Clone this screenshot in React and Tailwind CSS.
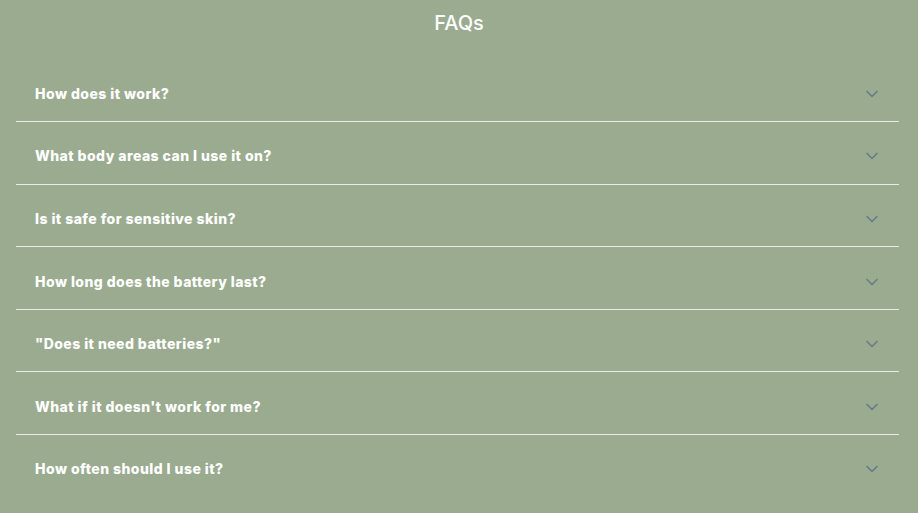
import React from "react";

const items = [
  "How does it work?",
  "What body areas can I use it on?",
  "Is it safe for sensitive skin?",
  "How long does the battery last?",
  "\"Does it need batteries?\"",
  "What if it doesn't work for me?",
  "How often should I use it?",
];

function Chevron() {
  return (
    <svg width="20" height="20" viewBox="0 0 24 24" fill="none" stroke="#6b7a86" strokeWidth="2" strokeLinecap="round" strokeLinejoin="round">
      <path d="m6 9 6 6 6-6" />
    </svg>
  );
}

export default function App() {
  return (
    <div className="min-h-[513px] w-full bg-[#9aab90] pt-[9px] font-['Inter',sans-serif]">
      <h2 className="text-center text-xl leading-7 font-medium text-white">FAQs</h2>
      <div className="ml-4 mr-[19px] mt-[22.4px]">
        {items.map((q, i) => (
          <div key={i} className={i < items.length - 1 ? "border-b border-[#e8ece5]" : ""}>
            <div className="flex items-center justify-between pl-[19px] pr-[17px] pt-[24.5px] pb-[17.1px]">
              <span className="text-sm leading-5 font-extrabold tracking-[0.45px] text-white">{q}</span>
              <Chevron />
            </div>
          </div>
        ))}
      </div>
    </div>
  );
}
